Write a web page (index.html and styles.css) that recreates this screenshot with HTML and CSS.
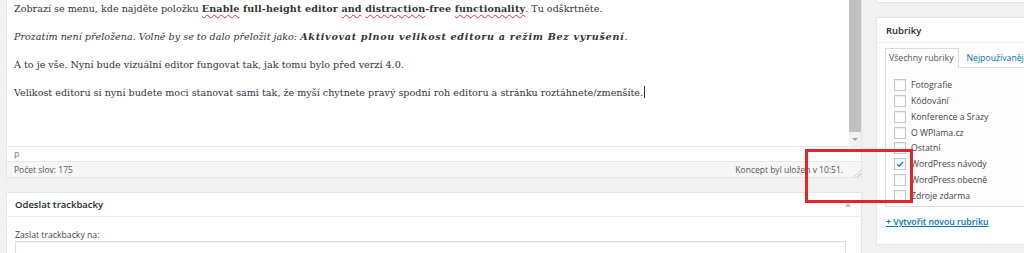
FILE: index.html
```html
<!DOCTYPE html>
<html lang="cs">
<head>
<meta charset="utf-8">
<title>Editor</title>
<link rel="stylesheet" href="styles.css">
</head>
<body>
<div class="page">
  <div class="main">
    <div class="editor">
      <div class="editor-body">
        <div class="content">
          <p>Zobrazí se menu, kde najděte položku <strong><span class="sp">Enable</span> full-height editor <span class="sp">and</span> <span class="sp">distraction</span>-free <span class="sp">functionality</span></strong>. Tu odškrtněte.</p>
          <p><em>Prozatím není přeložena. Volně by se to dalo přeložit jako: <strong>Aktivovat plnou velikost editoru a režim Bez vyrušení</strong></em>.</p>
          <p>A to je vše. Nyní bude vizuální editor fungovat tak, jak tomu bylo před verzí 4.0.</p>
          <p>Velikost editoru si nyní budete moci stanovat sami tak, že myší chytnete pravý spodní roh editoru a stránku roztáhnete/zmenšíte.<span class="caret"></span></p>
        </div>
        <div class="scrollbar">
          <div class="thumb"></div>
          <div class="arrow"></div>
        </div>
      </div>
      <div class="path">p</div>
      <div class="status">
        <span>Počet slov: 175</span>
        <span class="saved">Koncept byl uložen v 10:51.</span>
        <span class="resize"></span>
      </div>
    </div>

    <div class="postbox trackback">
      <div class="pb-head">
        <h3>Odeslat trackbacky</h3>
        <span class="toggle"></span>
      </div>
      <div class="tb-inside">
        <div class="tb-label">Zaslat trackbacky na:</div>
        <div class="tb-input"></div>
      </div>
    </div>
  </div>

  <div class="side">
    <div class="prev-box"></div>
    <div class="postbox cats">
      <div class="pb-head">
        <h3>Rubriky</h3>
      </div>
      <div class="cats-inside">
        <div class="tabs">
          <span class="tab active">Všechny rubriky</span>
          <span class="tab link">Nejpoužívanější</span>
        </div>
        <div class="panel">
          <div class="row"><span class="cb"></span>Fotografie</div>
          <div class="row"><span class="cb"></span>Kódování</div>
          <div class="row"><span class="cb"></span>Konference a Srazy</div>
          <div class="row"><span class="cb"></span>O WPlama.cz</div>
          <div class="row"><span class="cb"></span>Ostatní</div>
          <div class="row"><span class="cb"><svg viewBox="0 0 12 12" width="10" height="10"><path d="M2.5 6.2 L4.9 8.6 L9.6 3.2" fill="none" stroke="#1e8cbe" stroke-width="1.8"/></svg></span>WordPress návody</div>
          <div class="row"><span class="cb"></span>WordPress obecně</div>
          <div class="row"><span class="cb"></span>Zdroje zdarma</div>
        </div>
        <a class="add-new">+ Vytvořit novou rubriku</a>
      </div>
    </div>
  </div>
</div>
<div class="highlight"></div>
</body>
</html>
```

FILE: styles.css
```css
* { box-sizing: border-box; }
html, body { margin: 0; padding: 0; }
body {
  background: #f1f1f1;
  width: 1024px;
  height: 253px;
  overflow: hidden;
  position: relative;
  font-family: "Open Sans", "DejaVu Sans", sans-serif;
  color: #444;
}
.page {
  display: flex;
  align-items: flex-start;
  padding-left: 6px;
}
.main { width: 856px; flex: none; }
.side { width: 190px; margin-left: 14px; flex: none; }

/* editor */
.editor {
  background: #fff;
  border: 1px solid #e5e5e5;
  border-top: 0;
}
.editor-body { display: flex; height: 146px; }
.content {
  flex: 1;
  padding: 0 7px;
  font-family: "DejaVu Serif", "Liberation Serif", serif;
  font-size: 9.6px;
  line-height: 17px;
  color: #333;
}
.content p { margin: 0 0 11px; white-space: nowrap; }
.content strong { letter-spacing: 0.12px; }
.content em strong { letter-spacing: 0.7px; }
.sp {
  text-decoration: underline wavy #e0362f;
  text-decoration-thickness: 1px;
  text-underline-offset: 2px;
}
.caret {
  display: inline-block;
  width: 1px;
  height: 12px;
  background: #333;
  vertical-align: -2px;
  margin-left: 1px;
}
.scrollbar {
  width: 12px;
  display: flex;
  flex-direction: column;
  background: #f1f1f1;
}
.thumb { height: 132px; background: #c1c1c1; }
.arrow {
  height: 14px;
  display: flex;
  align-items: center;
  justify-content: center;
}
.arrow::before {
  content: "";
  border-left: 3px solid transparent;
  border-right: 3px solid transparent;
  border-top: 3px solid #a3a3a3;
}
.path {
  border-top: 1px solid #e5e5e5;
  height: 15px;
  padding-left: 7px;
  font-size: 8.7px;
  line-height: 14px;
  color: #777;
}
.status {
  border-top: 1px solid #e8e8e8;
  background: #f6f6f6;
  height: 16px;
  display: flex;
  align-items: center;
  padding: 0 0 0 7px;
  font-size: 8.5px;
  color: #555;
}
.saved { margin-left: auto; margin-right: 11px; }
.resize {
  width: 7px;
  height: 7px;
  align-self: flex-end;
  background: linear-gradient(135deg, transparent 45%, #ccc 45%, #ccc 55%, transparent 55%, transparent 70%, #ccc 70%, #ccc 80%, transparent 80%);
}

/* postboxes */
.postbox {
  background: #fff;
  border: 1px solid #e5e5e5;
}
.pb-head {
  display: flex;
  align-items: center;
  justify-content: space-between;
  border-bottom: 1px solid #eee;
}
.pb-head h3 {
  margin: 0;
  font-size: 9.5px;
  font-weight: 600;
  color: #23282d;
}
.trackback { margin-top: 14px; height: 80px; }
.trackback .pb-head { height: 24px; padding: 0 10px 0 8px; }
.toggle {
  border-left: 3.5px solid transparent;
  border-right: 3.5px solid transparent;
  border-bottom: 4px solid #bbb;
  margin-top: 1px;
}
.tb-inside { padding: 12px 15px 0 8px; }
.tb-label { font-size: 8.7px; line-height: 12px; color: #444; }
.tb-input {
  height: 22px;
  border: 1px solid #ddd;
  box-shadow: inset 0 1px 2px rgba(0,0,0,.05);
}

/* sidebar */
.prev-box {
  height: 3px;
  background: #fff;
  border: 1px solid #e5e5e5;
  border-top: 0;
}
.cats { margin-top: 14px; }
.cats .pb-head { height: 25px; padding-left: 9px; }
.cats-inside { padding: 5px 0 15px 8px; }
.tabs {
  display: flex;
  align-items: flex-end;
  height: 19px;
  position: relative;
  z-index: 1;
}
.tab {
  font-size: 8.7px;
  line-height: 18px;
  padding: 0 4px;
  white-space: nowrap;
}
.tab.active {
  height: 20px;
  border: 1px solid #ddd;
  border-bottom: 0;
  background: #fdfdfd;
  color: #555;
  padding: 0 5px 0 3px;
  margin-bottom: -1px;
}
.tab.link { color: #0073aa; padding-left: 7px; }
.panel {
  border: 1px solid #ddd;
  background: #fdfdfd;
  padding: 9px 0 2px 8px;
}
.row {
  display: flex;
  align-items: center;
  height: 15.86px;
  font-size: 8.7px;
  color: #444;
  white-space: nowrap;
}
.cb {
  width: 12px;
  height: 12px;
  flex: none;
  border: 1px solid #c3c6c9;
  background: #fff;
  box-shadow: inset 0 1px 2px rgba(0,0,0,.08);
  margin-right: 5px;
  display: flex;
  align-items: center;
  justify-content: center;
}
.add-new {
  display: block;
  margin-top: 8px;
  padding-left: 1px;
  font-size: 8.7px;
  line-height: 14px;
  font-weight: 600;
  color: #0073aa;
  text-decoration: underline;
}

/* annotation overlay */
.highlight {
  position: absolute;
  left: 805px;
  top: 149px;
  width: 108px;
  height: 54px;
  border: 3px solid #e5232b;
}
```
